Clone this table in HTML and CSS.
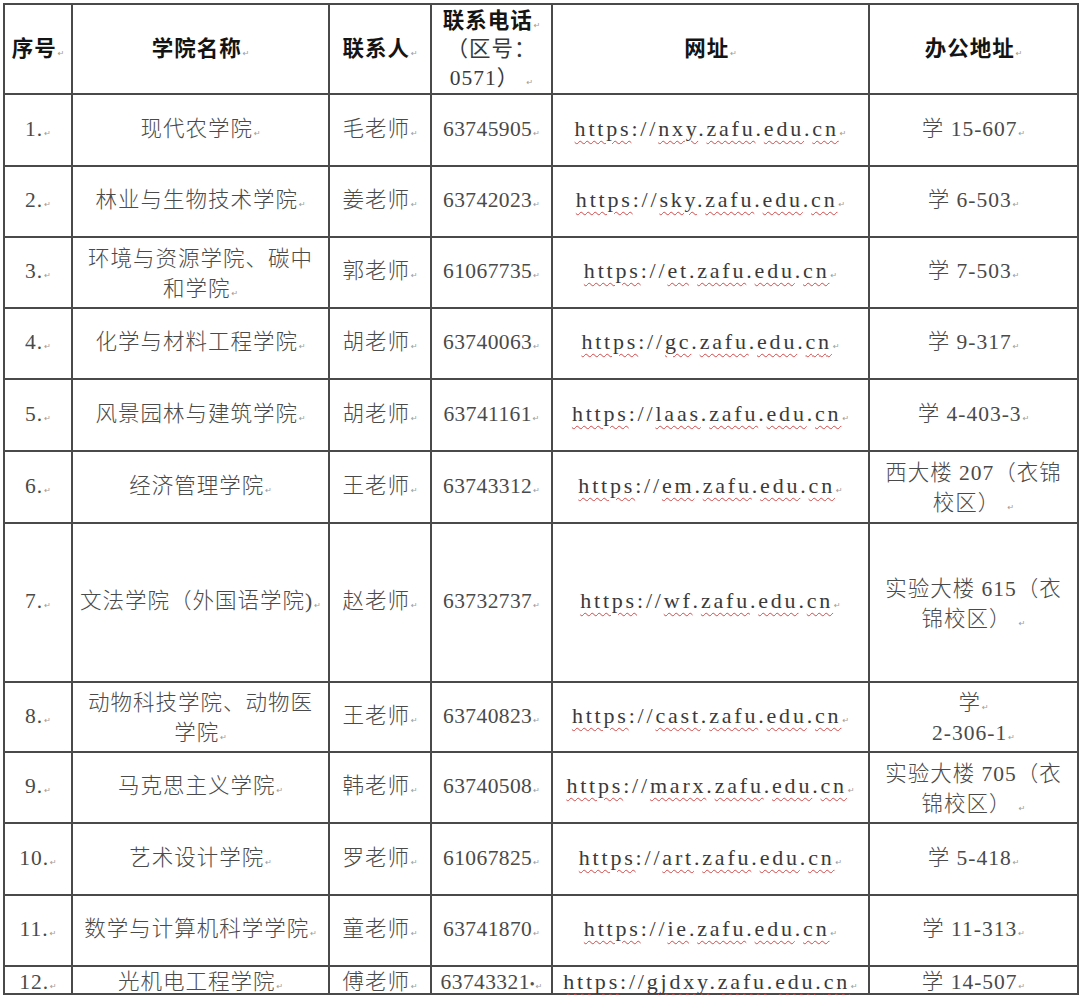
FILE: index.html
```html
<!DOCTYPE html>
<html lang="zh-CN">
<head>
<meta charset="utf-8">
<title>学院联系方式</title>
<link rel="stylesheet" href="styles.css">
</head>
<body>
<table class="grid">
  <colgroup>
    <col class="c-no"><col class="c-name"><col class="c-person"><col class="c-phone"><col class="c-url"><col class="c-addr">
  </colgroup>
  <thead>
    <tr class="r-head">
      <th class="h">序号<i class="pm">↵</i></th>
      <th class="h">学院名称<i class="pm">↵</i></th>
      <th class="h">联系人<i class="pm">↵</i></th>
      <th class="h phone-head"><span class="ln">联系电话<i class="pm">↵</i></span><span class="ln sub">（区号：</span><span class="ln sub">0571） <i class="pm">↵</i></span></th>
      <th class="h">网址<i class="pm">↵</i></th>
      <th class="h">办公地址<i class="pm">↵</i></th>
    </tr>
  </thead>
  <tbody>
    <tr class="r72">
      <td>1.<i class="pm">↵</i></td>
      <td>现代农学院<i class="pm">↵</i></td>
      <td>毛老师<i class="pm">↵</i></td>
      <td class="num">63745905<i class="pm">↵</i></td>
      <td class="url"><span class="sp">https</span>://<span class="sp">nxy</span>.<span class="sp">zafu</span>.<span class="sp">edu</span>.<span class="sp">cn</span><i class="pm">↵</i></td>
      <td>学 15-607<i class="pm">↵</i></td>
    </tr>
    <tr class="r">
      <td>2.<i class="pm">↵</i></td>
      <td>林业与生物技术学院<i class="pm">↵</i></td>
      <td>姜老师<i class="pm">↵</i></td>
      <td class="num">63742023<i class="pm">↵</i></td>
      <td class="url"><span class="sp">https</span>://<span class="sp">sky</span>.<span class="sp">zafu</span>.<span class="sp">edu</span>.<span class="sp">cn</span><i class="pm">↵</i></td>
      <td>学 6-503<i class="pm">↵</i></td>
    </tr>
    <tr class="r">
      <td>3.<i class="pm">↵</i></td>
      <td><span class="ln">环境与资源学院、碳中</span><span class="ln">和学院<i class="pm">↵</i></span></td>
      <td>郭老师<i class="pm">↵</i></td>
      <td class="num">61067735<i class="pm">↵</i></td>
      <td class="url"><span class="sp">https</span>://<span class="sp">et</span>.<span class="sp">zafu</span>.<span class="sp">edu</span>.<span class="sp">cn</span><i class="pm">↵</i></td>
      <td>学 7-503<i class="pm">↵</i></td>
    </tr>
    <tr class="r">
      <td>4.<i class="pm">↵</i></td>
      <td>化学与材料工程学院<i class="pm">↵</i></td>
      <td>胡老师<i class="pm">↵</i></td>
      <td class="num">63740063<i class="pm">↵</i></td>
      <td class="url"><span class="sp">https</span>://<span class="sp">gc</span>.<span class="sp">zafu</span>.<span class="sp">edu</span>.<span class="sp">cn</span><i class="pm">↵</i></td>
      <td>学 9-317<i class="pm">↵</i></td>
    </tr>
    <tr class="r72">
      <td>5.<i class="pm">↵</i></td>
      <td>风景园林与建筑学院<i class="pm">↵</i></td>
      <td>胡老师<i class="pm">↵</i></td>
      <td class="num">63741161<i class="pm">↵</i></td>
      <td class="url"><span class="sp">https</span>://<span class="sp">laas</span>.<span class="sp">zafu</span>.<span class="sp">edu</span>.<span class="sp">cn</span><i class="pm">↵</i></td>
      <td>学 4-403-3<i class="pm">↵</i></td>
    </tr>
    <tr class="r72">
      <td>6.<i class="pm">↵</i></td>
      <td>经济管理学院<i class="pm">↵</i></td>
      <td>王老师<i class="pm">↵</i></td>
      <td class="num">63743312<i class="pm">↵</i></td>
      <td class="url"><span class="sp">https</span>://<span class="sp">em</span>.<span class="sp">zafu</span>.<span class="sp">edu</span>.<span class="sp">cn</span><i class="pm">↵</i></td>
      <td><span class="ln">西大楼 207（衣锦</span><span class="ln">校区） <i class="pm">↵</i></span></td>
    </tr>
    <tr class="r-tall">
      <td>7.<i class="pm">↵</i></td>
      <td>文法学院（外国语学院)<i class="pm">↵</i></td>
      <td>赵老师<i class="pm">↵</i></td>
      <td class="num">63732737<i class="pm">↵</i></td>
      <td class="url"><span class="sp">https</span>://<span class="sp">wf</span>.<span class="sp">zafu</span>.<span class="sp">edu</span>.<span class="sp">cn</span><i class="pm">↵</i></td>
      <td><span class="ln">实验大楼 615（衣</span><span class="ln">锦校区） <i class="pm">↵</i></span></td>
    </tr>
    <tr class="r70">
      <td>8.<i class="pm">↵</i></td>
      <td><span class="ln">动物科技学院、动物医</span><span class="ln">学院<i class="pm">↵</i></span></td>
      <td>王老师<i class="pm">↵</i></td>
      <td class="num">63740823<i class="pm">↵</i></td>
      <td class="url"><span class="sp">https</span>://<span class="sp">cast</span>.<span class="sp">zafu</span>.<span class="sp">edu</span>.<span class="sp">cn</span><i class="pm">↵</i></td>
      <td><span class="ln">学<i class="pm">↵</i></span><span class="ln">2-306-1<i class="pm">↵</i></span></td>
    </tr>
    <tr class="r">
      <td>9.<i class="pm">↵</i></td>
      <td>马克思主义学院<i class="pm">↵</i></td>
      <td>韩老师<i class="pm">↵</i></td>
      <td class="num">63740508<i class="pm">↵</i></td>
      <td class="url"><span class="sp">https</span>://<span class="sp">marx</span>.<span class="sp">zafu</span>.<span class="sp">edu</span>.<span class="sp">cn</span><i class="pm">↵</i></td>
      <td><span class="ln">实验大楼 705（衣</span><span class="ln">锦校区） <i class="pm">↵</i></span></td>
    </tr>
    <tr class="r72">
      <td>10.<i class="pm">↵</i></td>
      <td>艺术设计学院<i class="pm">↵</i></td>
      <td>罗老师<i class="pm">↵</i></td>
      <td class="num">61067825<i class="pm">↵</i></td>
      <td class="url"><span class="sp">https</span>://<span class="sp">art</span>.<span class="sp">zafu</span>.<span class="sp">edu</span>.<span class="sp">cn</span><i class="pm">↵</i></td>
      <td>学 5-418<i class="pm">↵</i></td>
    </tr>
    <tr class="r">
      <td>11.<i class="pm">↵</i></td>
      <td>数学与计算机科学学院<i class="pm">↵</i></td>
      <td>童老师<i class="pm">↵</i></td>
      <td class="num">63741870<i class="pm">↵</i></td>
      <td class="url"><span class="sp">https</span>://<span class="sp">ie</span>.<span class="sp">zafu</span>.<span class="sp">edu</span>.<span class="sp">cn</span><i class="pm">↵</i></td>
      <td>学 11-313<i class="pm">↵</i></td>
    </tr>
    <tr class="r-last">
      <td><span class="ls">12.<i class="pm">↵</i></span></td>
      <td><span class="ls">光机电工程学院<i class="pm">↵</i></span></td>
      <td><span class="ls">傅老师<i class="pm">↵</i></span></td>
      <td class="num"><span class="ls">63743321<span class="dot">•</span><i class="pm">↵</i></span></td>
      <td class="url"><span class="ls"><span class="sp">https</span>://<span class="sp">gjdxy</span>.<span class="sp">zafu</span>.<span class="sp">edu</span>.<span class="sp">cn</span><i class="pm">↵</i></span></td>
      <td><span class="ls">学 14-507<i class="pm">↵</i></span></td>
    </tr>
  </tbody>
</table>
</body>
</html>
```

FILE: styles.css
```css
html, body {
  margin: 0;
  padding: 0;
  background: #ffffff;
}

body {
  padding: 3px 0 0 3px;
  font-family: "Liberation Serif", "Noto Sans CJK SC", serif;
  font-size: 21.5px;
  color: #4a4a4a;
}

.grid {
  width: 1076px;
  table-layout: fixed;
  border-collapse: collapse;
  border: 2px solid #7a7a7a;
}

.c-no { width: 68px; }
.c-name { width: 257px; }
.c-person { width: 102px; }
.c-phone { width: 121px; }
.c-url { width: 317px; }
.c-addr { width: 209px; }

.grid th,
.grid td {
  border: 2px solid #4a4a4a;
  padding: 2px 0 0 0;
  text-align: center;
  vertical-align: middle;
  line-height: 28px;
  letter-spacing: 1px;
  white-space: nowrap;
  font-weight: 300;
}

.grid .ln {
  display: block;
  height: 30px;
  line-height: 30px;
}

.r-head { height: 90px; }
.r { height: 71px; }
.r72 { height: 72px; }
.r70 { height: 70px; }
.r-tall { height: 159px; }
.r-last { height: 28px; }

.grid .r-head th {
  padding-top: 5px;
}

.grid .r-head th.phone-head {
  padding-top: 1px;
}

.grid .r-last td {
  padding-top: 4px;
  line-height: 22px;
}

.grid .ls {
  display: block;
  height: 22px;
  line-height: 22px;
}

.grid th.h {
  font-weight: 700;
  color: #141414;
}

.grid .phone-head .ln {
  height: 28.5px;
  line-height: 28.5px;
}

.grid .sub {
  font-weight: 400;
  color: #3a3a3a;
}

.grid .num {
  letter-spacing: 0.4px;
}

.grid .url {
  font-size: 22px;
  letter-spacing: 2.8px;
  color: #3a3a3a;
}

.sp {
  text-decoration: underline wavy #d24a4a;
  text-decoration-thickness: 1px;
  text-underline-offset: 4px;
}

.grid .dot {
  font-size: 14px;
  color: #555555;
  letter-spacing: 0;
}

.grid .pm {
  font-style: normal;
  font-family: "DejaVu Sans", sans-serif;
  font-size: 8px;
  font-weight: 400;
  color: #9a9a9a;
  letter-spacing: 0;
  margin-left: 1px;
  vertical-align: baseline;
}
```
